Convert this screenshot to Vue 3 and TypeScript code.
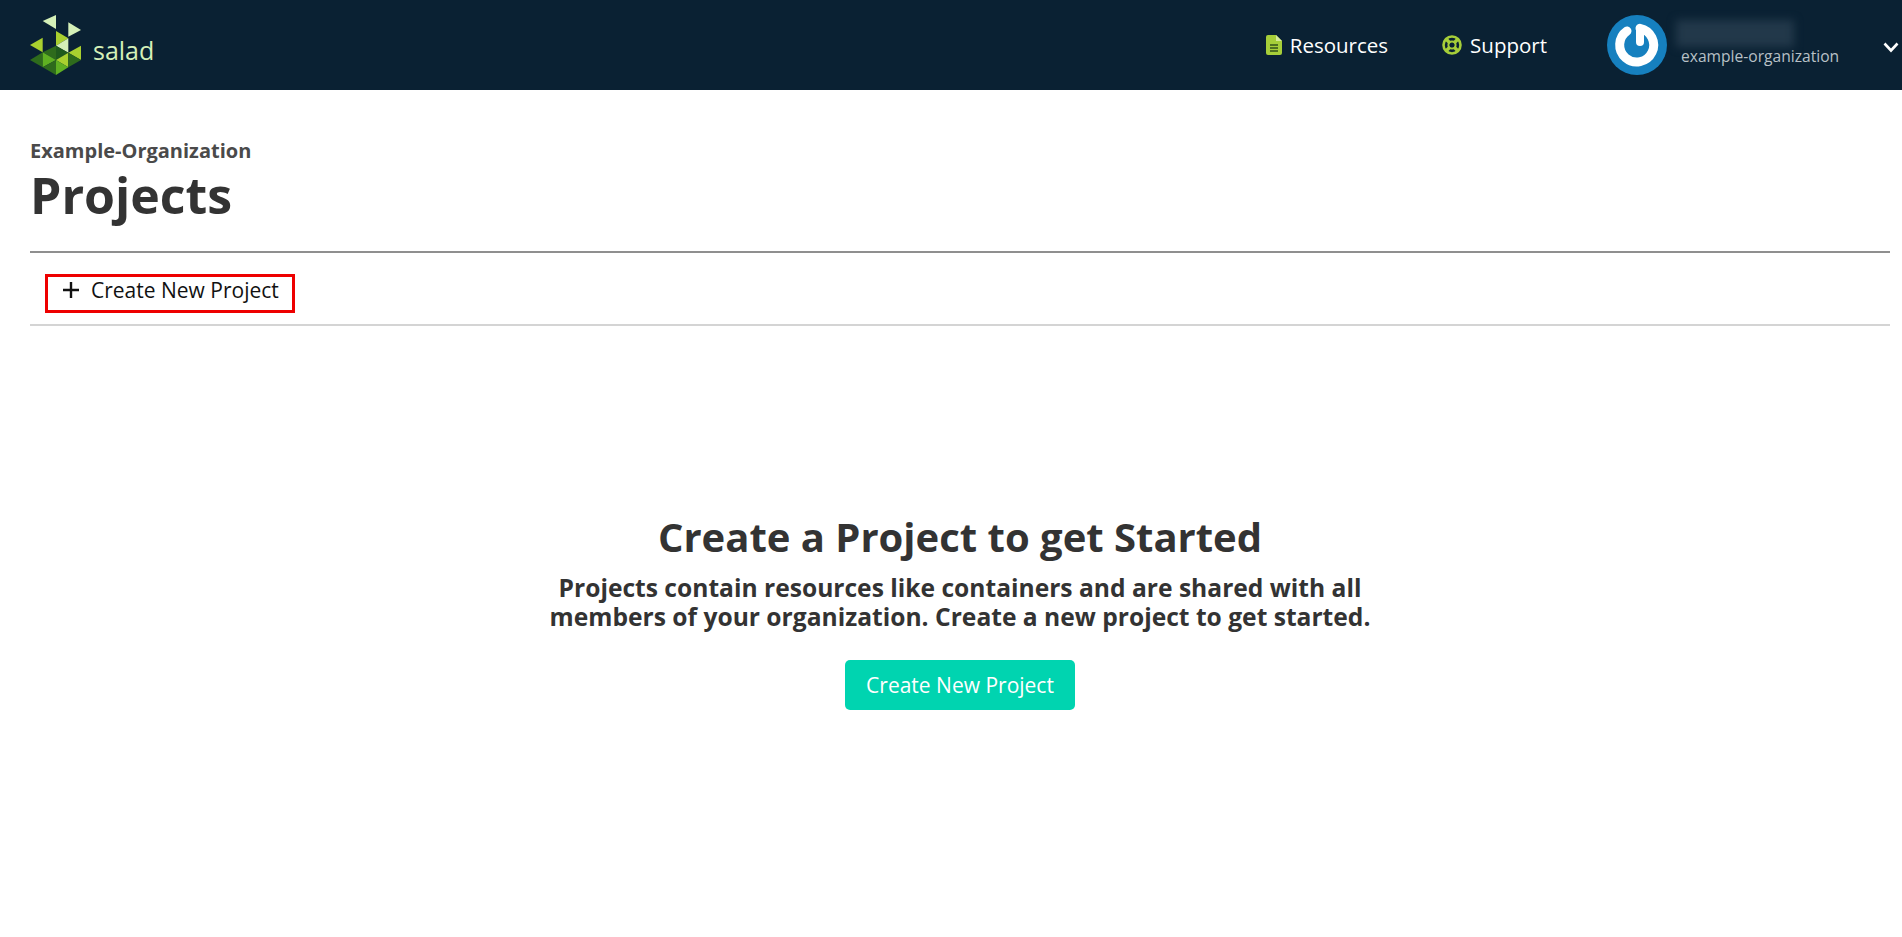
<template>
  <div class="page">
    <header class="topbar">
      <a class="brand">
        <svg class="brand-mark" width="52" height="60" viewBox="0 0 52 60">
          <polygon points="26,0 26,14 12.7,6" fill="#d5f0b8" />
          <polygon points="38.3,7.3 38.3,21.7 51,15" fill="#d5f0b8" />
          <polygon points="26,16 38.3,23.3 26,30.7" fill="#a9d02f" />
          <polygon points="38.3,23.3 38.3,37.7 26,30.7" fill="#d5f0b8" />
          <polygon points="12.7,22.7 12.7,37.3 0,30" fill="#a9d02f" />
          <polygon points="12.7,37.3 26,30.7 26,45" fill="#2e6b1c" />
          <polygon points="26,30.7 38.3,37.7 26,45" fill="#1f5a1c" />
          <polygon points="51,30.7 51,45 38.3,37.7" fill="#a9d02f" />
          <polygon points="26,45 38.3,37.7 38.3,52.3" fill="#a9d02f" />
          <polygon points="38.3,37.7 51,45 38.3,52.3" fill="#2e6b1c" />
          <polygon points="0,45 12.7,37.3 12.7,52.3" fill="#2e6b1c" />
          <polygon points="12.7,37.3 26,45 12.7,52.3" fill="#5fb022" />
          <polygon points="12.7,52.3 26,45 26,60" fill="#2e6b1c" />
          <polygon points="26,45 38.3,52.3 26,60" fill="#5fb022" />
        </svg>
        <span class="brand-name">salad</span>
      </a>
      <nav class="nav">
        <a class="nav-link resources">
          <svg width="16" height="20" viewBox="0 0 16 20">
            <path d="M2 0h8l6 6v12a2 2 0 0 1-2 2H2a2 2 0 0 1-2-2V2a2 2 0 0 1 2-2z" fill="#a6ce39" />
            <path d="M10 0v6h6z" fill="#d6e99a" />
            <path d="M4 10h8M4 13h8M4 16h8" stroke="#33521a" stroke-width="1.4" />
          </svg>
          Resources
        </a>
        <a class="nav-link support">
          <svg width="20" height="20" viewBox="0 0 20 20">
            <circle cx="10" cy="10" r="8.5" fill="none" stroke="#a6ce39" stroke-width="2.6" />
            <circle cx="10" cy="10" r="3.6" fill="none" stroke="#a6ce39" stroke-width="2" />
            <path d="M4 4l4 4M16 4l-4 4M4 16l4-4M16 16l-4-4" stroke="#a6ce39" stroke-width="3.4" />
          </svg>
          Support
        </a>
        <div class="account">
          <svg class="avatar" width="60" height="60" viewBox="0 0 60 60">
            <circle cx="30" cy="30" r="30" fill="#1680bf" />
            <path d="M20 16A17 17 0 1 0 33 13.3" fill="none" stroke="#fff" stroke-width="9" stroke-linecap="round" />
            <path d="M33 15V27" stroke="#fff" stroke-width="8" stroke-linecap="round" />
          </svg>
          <div class="account-text">
            <div class="account-name"></div>
            <div class="account-org">example-organization</div>
          </div>
          <svg class="chevron" width="16" height="11" viewBox="0 0 16 11">
            <path d="M1.5 1.5L8 8.5l6.5-7" fill="none" stroke="#fff" stroke-width="2.6" />
          </svg>
        </div>
      </nav>
    </header>

    <main class="content">
      <div class="org">Example-Organization</div>
      <h1 class="title">Projects</h1>
      <div class="toolbar">
        <button class="create-link">
          <svg width="18" height="18" viewBox="0 0 18 18">
            <path d="M9 1v16M1 9h16" stroke="#111" stroke-width="2.4" />
          </svg>
          Create New Project
        </button>
      </div>
      <section class="empty">
        <h2>Create a Project to get Started</h2>
        <p>Projects contain resources like containers and are shared with all<br />members of your organization. Create a new project to get started.</p>
        <button class="cta">Create New Project</button>
      </section>
    </main>
  </div>
</template>

<script setup lang="ts">
</script>

<style>
body {
  margin: 0;
  background: #fff;
}
</style>

<style scoped>
.page {
  min-height: 937px;
  font-family: "Open Sans", sans-serif;
  color: #333;
}

.topbar {
  height: 90px;
  background: #0a2133;
  display: flex;
  align-items: center;
  justify-content: space-between;
  padding: 0 0 0 30px;
}

.brand {
  display: flex;
  align-items: center;
}

.brand-name {
  color: #d5f0b8;
  font-family: "Open Sans", sans-serif;
  font-size: 25px;
  margin-left: 11px;
  margin-top: 9px;
}

.nav {
  display: flex;
  align-items: center;
}

.nav-link {
  display: flex;
  align-items: center;
  gap: 8px;
  color: #fff;
  font-size: 20.5px;
  font-weight: 500;
}

.resources {
  margin-right: 54px;
}

.support {
  margin-right: 60px;
}

.account {
  display: flex;
  align-items: center;
}

.account-text {
  margin-left: 14px;
  width: 202px;
}

.account-name {
  width: 118px;
  height: 27px;
  background: #22384a;
  filter: blur(4px);
  margin-top: -3px;
  margin-left: -5px;
  margin-bottom: -2px;
}

.account-org {
  color: #b9c1c7;
  font-size: 15.6px;
}

.chevron {
  margin-right: 3px;
  margin-top: 4px;
}

.content {
  padding: 0 12px 0 30px;
}

.org {
  margin-top: 48px;
  font-size: 20px;
  line-height: 26px;
  font-weight: 700;
  color: #4a4a4a;
}

.title {
  margin: 0;
  font-size: 50px;
  line-height: 62px;
  font-weight: 700;
  color: #333;
}

.toolbar {
  margin-top: 25px;
  border-top: 2px solid #8f8f8f;
  border-bottom: 2px solid #d4d4d4;
  height: 75px;
  box-sizing: border-box;
  padding: 21px 0 0 15px;
}

.create-link {
  display: flex;
  align-items: center;
  gap: 11px;
  box-sizing: border-box;
  width: 250px;
  height: 39px;
  padding: 0 0 8px 14px;
  background: #fff;
  border: 3px solid #ee0000;
  font-family: inherit;
  font-size: 21px;
  color: #111;
}

.empty {
  margin-top: 185px;
  text-align: center;
}

.empty h2 {
  margin: 0;
  font-size: 40px;
  line-height: 52px;
  font-weight: 700;
  color: #333;
}

.empty p {
  margin: 10px 0 0;
  font-size: 24.6px;
  line-height: 29px;
  font-weight: 700;
  color: #333;
}

.cta {
  margin-top: 29px;
  width: 230px;
  height: 50px;
  border: 0;
  border-radius: 5px;
  background: #00d4b0;
  color: #fff;
  font-family: inherit;
  font-size: 21px;
  font-weight: 500;
}
</style>
